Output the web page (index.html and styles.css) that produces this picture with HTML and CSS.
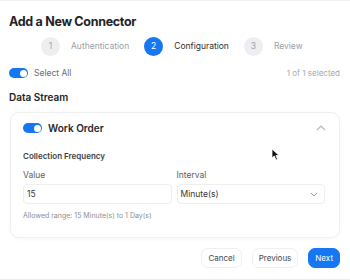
FILE: index.html
```html
<!DOCTYPE html>
<html lang="en">
<head>
  <meta charset="UTF-8">
  <title>Add a New Connector</title>
  <link rel="stylesheet" href="styles.css">
</head>
<body>
  <div class="modal">
    <h2 class="title">Add a New Connector</h2>

    <div class="steps">
      <div class="step"><span class="num">1</span><span class="label">Authentication</span></div>
      <div class="step active"><span class="num">2</span><span class="label">Configuration</span></div>
      <div class="step"><span class="num">3</span><span class="label">Review</span></div>
    </div>

    <div class="select-row">
      <div class="toggle-wrap"><span class="toggle"></span><span class="select-all">Select All</span></div>
      <span class="count">1 of 1 selected</span>
    </div>

    <h3 class="section">Data Stream</h3>

    <div class="card">
      <div class="card-head">
        <div class="toggle-wrap"><span class="toggle"></span><span class="stream-name">Work Order</span></div>
        <svg class="chev" width="10" height="6" viewBox="0 0 10 6"><path d="M1 5 L5 1 L9 5" fill="none" stroke="#b8b8b8" stroke-width="1.2"/></svg>
      </div>
      <div class="card-body">
        <div class="sub">Collection Frequency</div>
        <div class="fields">
          <div class="field">
            <label>Value</label>
            <div class="input">15</div>
          </div>
          <div class="field">
            <label>Interval</label>
            <div class="input select">Minute(s)
              <svg width="8" height="5" viewBox="0 0 8 5"><path d="M1 1 L4 4 L7 1" fill="none" stroke="#999" stroke-width="1"/></svg>
            </div>
          </div>
        </div>
        <div class="hint">Allowed range: 15 Minute(s) to 1 Day(s)</div>
      </div>
      <svg class="cursor" width="9" height="13" viewBox="0 0 9 13"><path d="M1 1 L1 10 L3.3 8 L5 12 L6.5 11.3 L4.9 7.6 L8 7.4 Z" fill="#111" stroke="#fff" stroke-width="0.8"/></svg>
    </div>

    <div class="actions">
      <button class="btn">Cancel</button>
      <button class="btn">Previous</button>
      <button class="btn primary">Next</button>
    </div>
  </div>
</body>
</html>
```

FILE: styles.css
```css
body {
  margin: 0;
  background: #fff;
  font-family: Inter, "Open Sans", sans-serif;
  color: #1f2328;
}
.modal {
  width: 350px;
  height: 280px;
  box-sizing: border-box;
  padding: 11px 10px 0 9px;
  border-top: 1px solid #f0f0f0;
  border-bottom: 1px solid #ececec;
  position: relative;
}
.title {
  margin: 0;
  font-size: 12.5px;
  font-weight: 700;
  line-height: 19px;
  letter-spacing: -0.3px;
}
.steps {
  display: flex;
  align-items: center;
  gap: 15px;
  margin-top: 5px;
  padding-left: 32px;
  height: 20px;
}
.step {
  display: flex;
  align-items: center;
  gap: 11px;
}
.num {
  width: 19px;
  height: 19px;
  border-radius: 50%;
  background: #eceef1;
  color: #a0a4aa;
  font-size: 8.5px;
  display: flex;
  align-items: center;
  justify-content: center;
}
.label {
  font-size: 8.5px;
  color: #9a9ea4;
}
.step.active .num {
  background: #1677f2;
  color: #fff;
}
.step.active .label {
  color: #2a2e33;
}
.select-row {
  display: flex;
  justify-content: space-between;
  align-items: center;
  margin-top: 11px;
  height: 12px;
}
.toggle-wrap {
  display: flex;
  align-items: center;
  gap: 6px;
}
.toggle {
  width: 19px;
  height: 10px;
  border-radius: 6px;
  background: #1677f2;
  position: relative;
}
.toggle::after {
  content: "";
  position: absolute;
  right: 1.5px;
  top: 1.5px;
  width: 7px;
  height: 7px;
  border-radius: 50%;
  background: #fff;
}
.select-all {
  font-size: 8.5px;
  color: #6a6e74;
}
.count {
  font-size: 8px;
  color: #a4a8ad;
}
.section {
  margin: 11px 0 0;
  font-size: 10px;
  font-weight: 600;
  line-height: 14px;
}
.card {
  margin: 8px 0 0 1px;
  border: 1px solid #efefef;
  border-radius: 9px;
  box-shadow: 0 1px 4px rgba(0, 0, 0, 0.04);
  height: 126px;
  box-sizing: border-box;
  position: relative;
}
.card-head {
  display: flex;
  justify-content: space-between;
  align-items: center;
  padding: 8px 13px 0 12px;
  height: 14px;
}
.stream-name {
  font-size: 10px;
  font-weight: 600;
  color: #24282d;
}
.card-body {
  padding: 16px 14px 0 12px;
}
.sub {
  font-size: 8px;
  font-weight: 600;
  color: #3a3e44;
}
.fields {
  display: flex;
  gap: 5px;
  margin-top: 9px;
}
.field {
  flex: 1;
  display: flex;
  flex-direction: column;
}
.field label {
  font-size: 8.5px;
  color: #5a5e64;
  line-height: 11px;
}
.input {
  margin-top: 3px;
  height: 18px;
  border: 1px solid #eeeeee;
  border-radius: 4px;
  font-size: 8.5px;
  color: #33373c;
  display: flex;
  align-items: center;
  justify-content: space-between;
  padding: 0 6px 0 3px;
}
.hint {
  margin-top: 7px;
  font-size: 7px;
  color: #8a8e94;
}
.cursor {
  position: absolute;
  left: 260px;
  top: 35px;
}
.actions {
  display: flex;
  justify-content: flex-end;
  gap: 10px;
  margin-top: 10px;
}
.btn {
  font-family: inherit;
  font-size: 8px;
  height: 20px;
  padding: 0 6px;
  border: 1px solid #efefef;
  border-radius: 7px;
  background: #fff;
  color: #44484d;
}
.btn.primary {
  background: #1677f2;
  border-color: #1677f2;
  color: #fff;
  padding: 0 6px;
}
```
